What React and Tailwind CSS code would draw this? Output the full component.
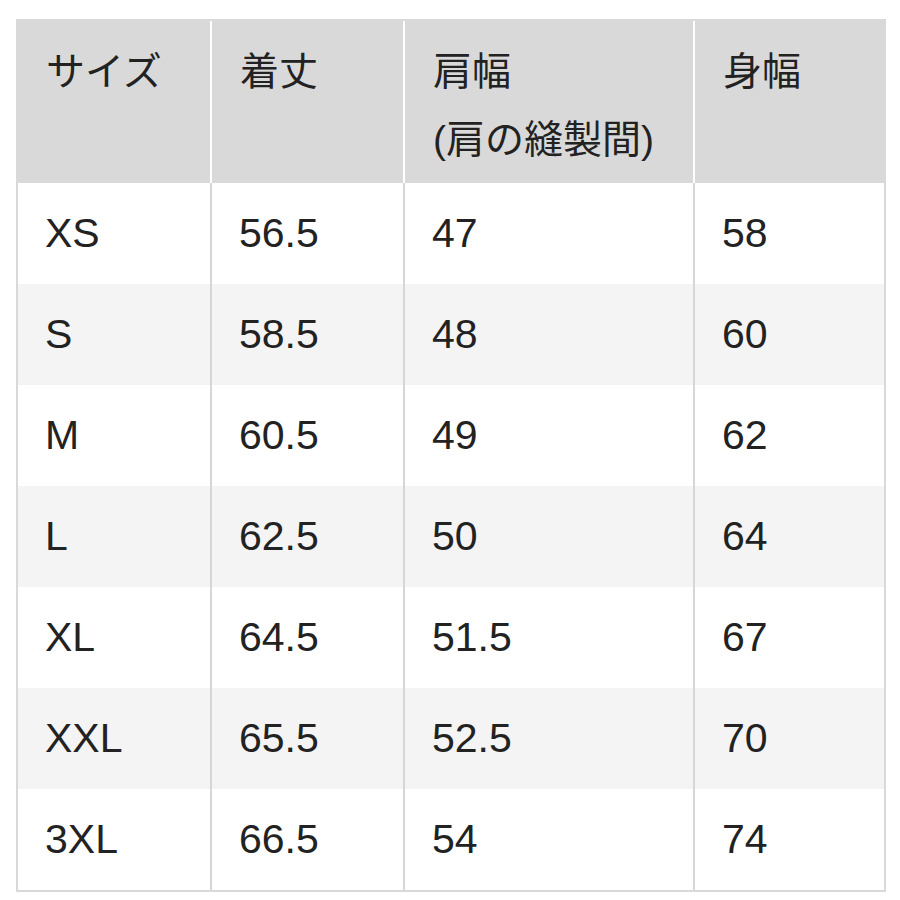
const rows = [
  ["XS", "56.5", "47", "58"],
  ["S", "58.5", "48", "60"],
  ["M", "60.5", "49", "62"],
  ["L", "62.5", "50", "64"],
  ["XL", "64.5", "51.5", "67"],
  ["XXL", "65.5", "52.5", "70"],
  ["3XL", "66.5", "54", "74"],
];

const headers = [["サイズ"], ["着丈"], ["肩幅", "(肩の縫製間)"], ["身幅"]];

export default function App() {
  return (
    <div
      className="w-[900px] h-[900px] bg-white pt-[19px] pl-[16px] text-[#222]"
      style={{ fontFamily: '"Liberation Sans", "Noto Sans CJK JP", sans-serif' }}
    >
      <div className="w-[870px] border-2 border-[#d9d9d9] grid grid-cols-[192px_193px_290px_191px]">
        {headers.map((lines, i) => (
          <div
            key={i}
            className={
              "h-[162px] bg-[#d9d9d9] pt-[17px] pl-[28px] text-[39px] leading-[68px] " +
              (i > 0 ? "border-l-2 border-white" : "")
            }
          >
            {lines.map((l) => (
              <div key={l}>{l}</div>
            ))}
          </div>
        ))}
        {rows.map((r, ri) =>
          r.map((v, ci) => (
            <div
              key={ri + "-" + ci}
              className={
                "h-[101px] flex items-center pl-[27px] text-[41px] " +
                (ri % 2 === 1 ? "bg-[#f4f4f4] " : "bg-white ") +
                (ci > 0 ? "border-l-2 border-[#d6d6d6]" : "")
              }
            >
              {v}
            </div>
          ))
        )}
      </div>
    </div>
  );
}
